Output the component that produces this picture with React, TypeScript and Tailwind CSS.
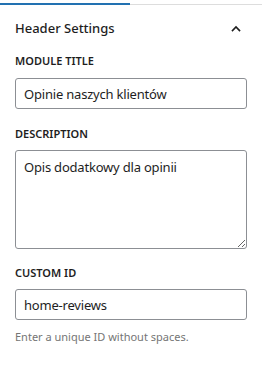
import React from 'react';

const font = { fontFamily: '"Noto Sans", "Open Sans", sans-serif' };

const App: React.FC = () => {
    return (
        <div className="w-[262px] h-[371px] bg-white text-[#1e1e1e]" style={font}>
            <div className="pt-[3px] flex items-end">
                <div className="w-[130px] h-[2px] bg-[#2271b1]" />
                <div className="flex-1 h-px bg-[#dddddd]" />
            </div>

            <div className="flex items-center justify-between pl-[15px] pr-[20px] pt-[2px] h-[46px]">
                <h3 className="text-[13px] font-medium">Header Settings</h3>
                <svg width="12" height="12" viewBox="0 0 24 24" fill="none" stroke="#1e1e1e" strokeWidth="3.2" strokeLinecap="square">
                    <path d="M5 15l7-7 7 7" />
                </svg>
            </div>

            <div className="px-[15px] flex flex-col">
                <label className="text-[11px] font-semibold uppercase mt-[2px] leading-4">Module Title</label>
                <input
                    className="mt-[9px] h-[31px] w-full border border-[#8c8f94] rounded-[3px] px-[8px] text-[13px] tracking-[-0.2px] text-[#1e1e1e] outline-none"
                    defaultValue="Opinie naszych klientów"
                />

                <label className="text-[11px] font-semibold uppercase mt-[17px] leading-4">Description</label>
                <textarea
                    className="mt-[8px] h-[99px] w-full border border-[#8c8f94] rounded-[3px] px-[8px] pt-[7px] text-[13px] tracking-[-0.2px] text-[#1e1e1e] outline-none"
                    defaultValue="Opis dodatkowy dla opinii"
                />

                <label className="text-[11px] font-semibold uppercase mt-[16px] leading-4">Custom ID</label>
                <input
                    className="mt-[8px] h-[31px] w-full border border-[#8c8f94] rounded-[3px] px-[8px] text-[13px] tracking-[-0.2px] text-[#1e1e1e] outline-none"
                    defaultValue="home-reviews"
                />
                <p className="mt-[9px] text-[11px] text-[#757575] leading-4">Enter a unique ID without spaces.</p>
            </div>
        </div>
    );
};

export default App;
